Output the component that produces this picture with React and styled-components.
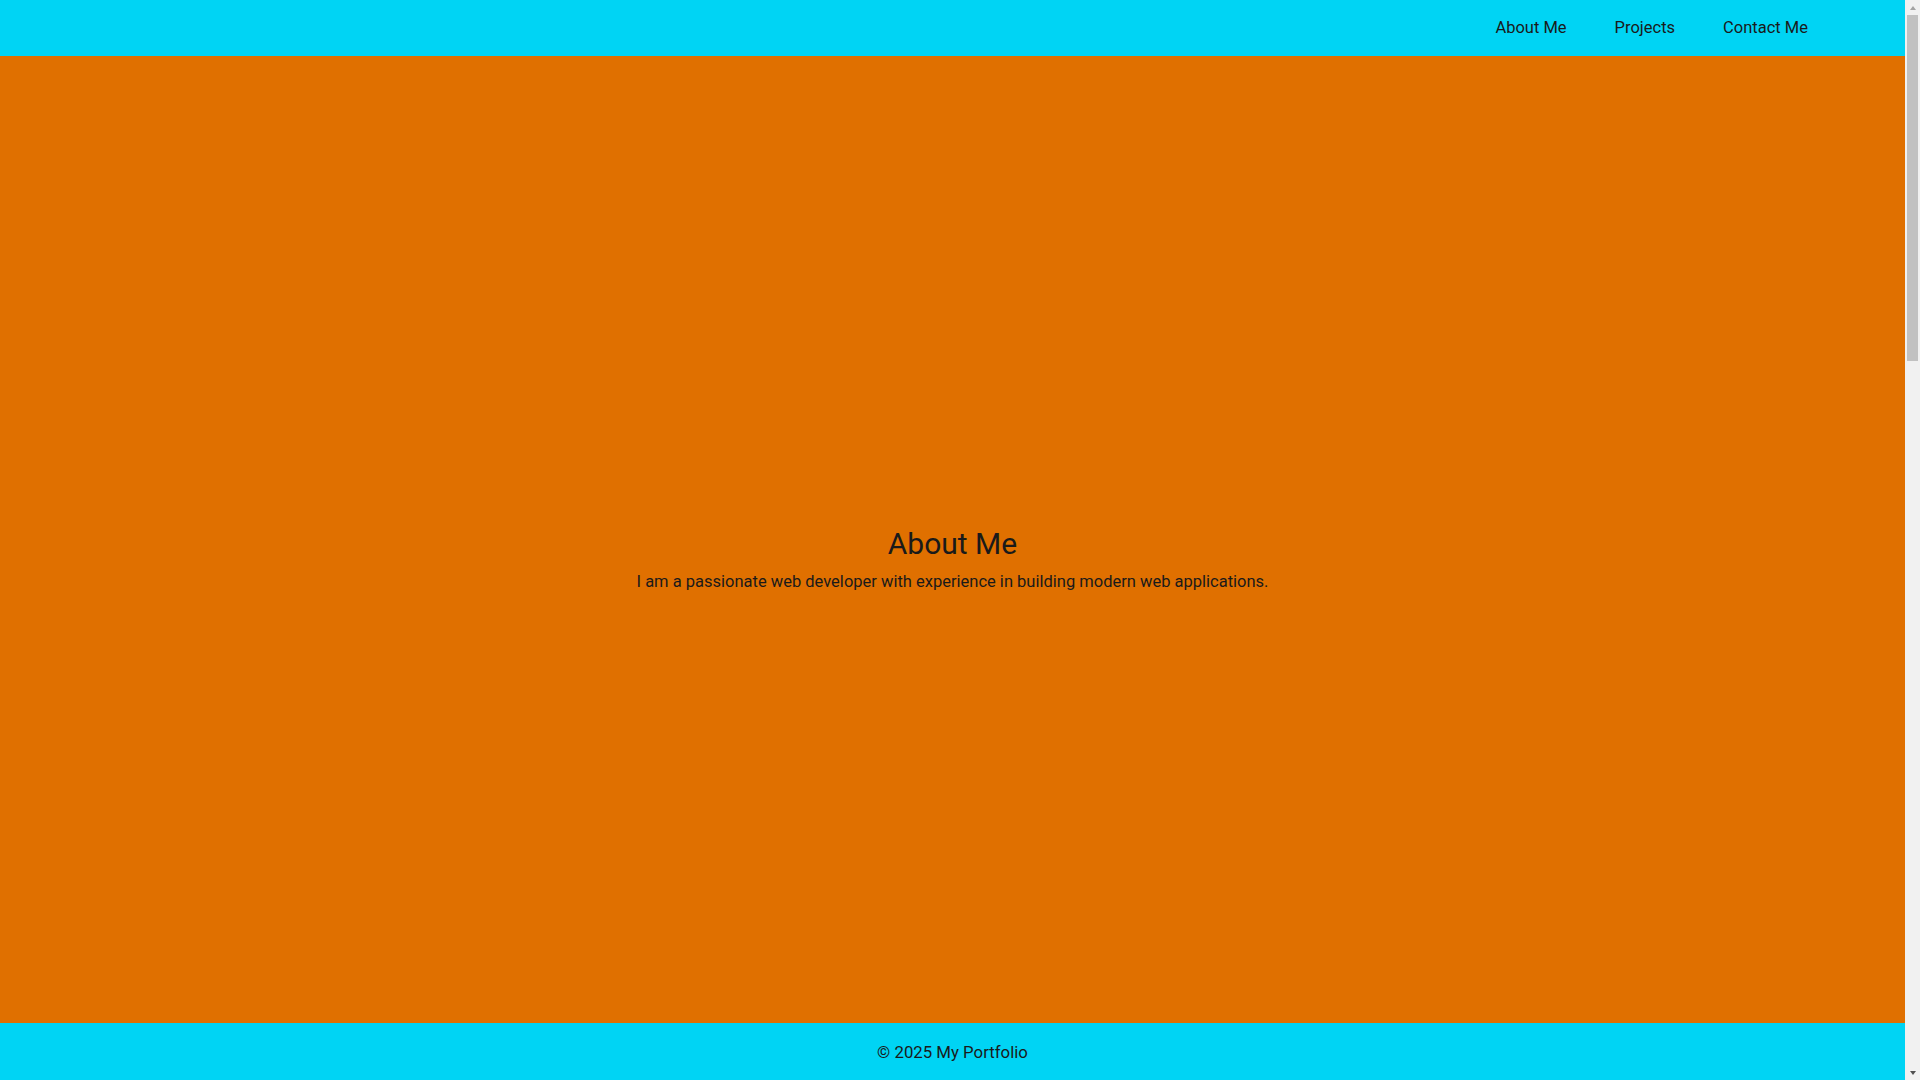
import styled, { createGlobalStyle } from 'styled-components'

const GlobalStyle = createGlobalStyle`
  * {
    box-sizing: border-box;
  }

  html, body {
    margin: 0;
    padding: 0;
    height: 100%;
    overflow: hidden;
  }

  body {
    font-family: Roboto, "Liberation Sans", sans-serif;
    color: #1a1a1a;
  }
`

const sections = [
  {
    id: 'about',
    title: 'About Me',
    text: 'I am a passionate web developer with experience in building modern web applications.',
  },
  {
    id: 'projects',
    title: 'Projects',
  },
  {
    id: 'contact',
    title: 'Contact Me',
  },
]

const App = () => {
  return (
    <Page>
      <GlobalStyle />
      <Viewport>
        <Header>
          <Nav>
            {sections.map(s => (
              <NavLink key={s.id} href={`#${s.id}`}>{s.title}</NavLink>
            ))}
          </Nav>
        </Header>
        <Content>
          {sections.map(s => (
            <Section key={s.id} id={s.id}>
              {s.text && (
                <>
                  <h2>{s.title}</h2>
                  <p>{s.text}</p>
                </>
              )}
            </Section>
          ))}
        </Content>
        <Footer>© 2025 My Portfolio</Footer>
      </Viewport>
      <ScrollRail>
        <ScrollButton $up />
        <ScrollTrack>
          <ScrollThumb $size={346} />
        </ScrollTrack>
        <ScrollButton />
      </ScrollRail>
    </Page>
  )
}

export default App

const Page = styled.div`
  display: flex;
  height: 100vh;
  background: #f1f1f1;
`

const Viewport = styled.div`
  flex: 1;
  min-width: 0;
  display: flex;
  flex-direction: column;
  background: #e07000;
`

const Header = styled.header`
  flex: 0 0 56px;
  background: #00d4f4;
  display: flex;
  align-items: center;
  justify-content: flex-end;
  padding: 0 97px 0 0;
`

const Nav = styled.nav`
  display: flex;
  align-items: center;
  gap: 48px;
`

const NavLink = styled.a`
  color: #1a1a1a;
  text-decoration: none;
  font-size: 16.5px;
  line-height: 24px;

  &:hover {
    text-decoration: underline;
  }
`

const Content = styled.main`
  flex: 1;
  overflow-y: auto;
  scrollbar-width: none;
`

const Section = styled.section`
  min-height: 100%;
  padding: 40px 20px 0;
  display: flex;
  flex-direction: column;
  align-items: center;
  justify-content: center;
  text-align: center;

  h2 {
    font-size: 30px;
    font-weight: 400;
    line-height: 36px;
    margin: 0;
  }

  p {
    font-size: 16.5px;
    line-height: 24px;
    margin: 8px 0 0;
  }
`

const Footer = styled.footer`
  flex: 0 0 57px;
  background: #00d4f4;
  display: flex;
  align-items: center;
  justify-content: center;
  font-size: 16.8px;
  color: #1a1a1a;
`

const ScrollRail = styled.div`
  flex: 0 0 15px;
  display: flex;
  flex-direction: column;
  background: #f1f1f1;
`

const ScrollButton = styled.div`
  flex: 0 0 15px;
  display: flex;
  align-items: center;
  justify-content: center;

  &::before {
    content: '';
    width: 0;
    height: 0;
    border-left: 3.5px solid transparent;
    border-right: 3.5px solid transparent;
    ${p => p.$up
      ? 'border-bottom: 4px solid #a3a3a3;'
      : 'border-top: 4px solid #505050;'}
  }
`

const ScrollTrack = styled.div`
  flex: 1;
  padding: 0 2px;
`

const ScrollThumb = styled.div`
  height: ${p => p.$size}px;
  background: #c1c1c1;
`
